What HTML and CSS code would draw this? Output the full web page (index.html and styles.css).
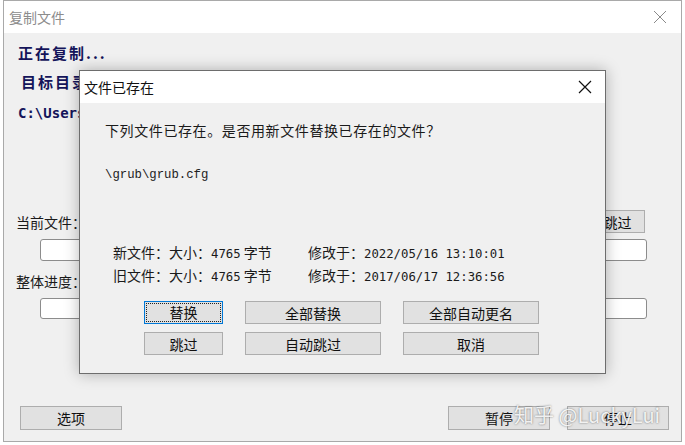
FILE: index.html
```html
<!DOCTYPE html>
<html lang="zh-CN">

<head>
    <meta charset="UTF-8">
    <meta name="viewport" content="width=device-width, initial-scale=1.0">
    <title>复制文件</title>
    <link rel="stylesheet" href="styles.css">
</head>

<body>
    <!-- Main copy window -->
    <div class="window">
        <div class="titlebar">
            <span class="title">复制文件</span>
            <svg class="close" width="14" height="14" viewBox="0 0 14 14">
                <path d="M1 1 L13 13 M13 1 L1 13" stroke="#8a8a8a" stroke-width="1" fill="none"/>
            </svg>
        </div>

        <div class="content">
            <div class="status">正在复制...</div>
            <div class="status target">目标目录：</div>
            <div class="path">C:\Users\Administrator\Desktop\boot</div>

            <div class="row file-row">
                <span class="label">当前文件：</span>
                <button class="btn small">跳过</button>
            </div>
            <div class="bar"></div>

            <div class="row total-row">
                <span class="label">整体进度：</span>
            </div>
            <div class="bar"></div>

            <div class="actions">
                <button class="btn wide">选项</button>
                <div class="right">
                    <button class="btn wide">暂停</button>
                    <button class="btn wide">停止</button>
                </div>
            </div>
        </div>
    </div>

    <!-- File exists dialog -->
    <div class="dialog">
        <div class="dialog-title">
            <span>文件已存在</span>
            <svg class="close" width="14" height="14" viewBox="0 0 14 14">
                <path d="M1 1 L13 13 M13 1 L1 13" stroke="#111" stroke-width="1.2" fill="none"/>
            </svg>
        </div>
        <div class="dialog-body">
            <p class="question">下列文件已存在。是否用新文件替换已存在的文件？</p>
            <p class="filename">\grub\grub.cfg</p>

            <div class="info">
                <div class="info-line">
                    <span class="who">新文件：大小：<span class="num">4765</span> 字节</span>
                    <span>修改于：<span class="num">2022/05/16 13:10:01</span></span>
                </div>
                <div class="info-line">
                    <span class="who">旧文件：大小：<span class="num">4765</span> 字节</span>
                    <span>修改于：<span class="num">2017/06/17 12:36:56</span></span>
                </div>
            </div>

            <div class="choices">
                <button class="btn choice focus"><span>替换</span></button>
                <button class="btn choice">全部替换</button>
                <button class="btn choice">全部自动更名</button>
                <button class="btn choice">跳过</button>
                <button class="btn choice">自动跳过</button>
                <button class="btn choice">取消</button>
            </div>
        </div>
    </div>

    <!-- Watermark -->
    <div class="watermark">知乎 @LuckyLui</div>
</body>

</html>
```

FILE: styles.css
```css
/* Base */
body {
    margin: 0;
    width: 685px;
    height: 445px;
    overflow: hidden;
    background: #ffffff;
    font-family: "Noto Sans CJK SC", "Noto Sans", sans-serif;
    font-size: 14px;
    color: #1a1a1a;
    position: relative;
}

/* Main window */
.window {
    position: absolute;
    left: 3px;
    top: 0;
    width: 677px;
    height: 440px;
    border: 1px solid #a9a9a9;
    background: #f0f0f0;
    display: flex;
    flex-direction: column;
}

.titlebar {
    height: 32px;
    background: #ffffff;
    display: flex;
    align-items: center;
    justify-content: space-between;
    padding: 0 14px 0 5px;
}

.title {
    color: #8c8c8c;
    font-size: 14px;
}

.content {
    flex: 1;
    display: flex;
    flex-direction: column;
    padding: 0 12px;
}

.status {
    height: 20px;
    line-height: 20px;
    margin-top: 10px;
    font-size: 15px;
    font-weight: bold;
    letter-spacing: 2px;
    color: #14145a;
    padding-left: 2px;
}

.target {
    margin-top: 9px;
    padding-left: 5px;
}

.path {
    height: 20px;
    line-height: 20px;
    margin-top: 11px;
    padding-left: 2px;
    font-family: "DejaVu Sans Mono", monospace;
    font-weight: bold;
    font-size: 14px;
    color: #14145a;
    white-space: nowrap;
}

.row {
    display: flex;
    align-items: center;
    justify-content: space-between;
    height: 20px;
}

.file-row {
    height: 23px;
    margin-top: 87px;
}

.total-row {
    margin-top: 10px;
}

.label {
    font-size: 14px;
}

.bar {
    box-sizing: border-box;
    height: 22px;
    margin: 6px 22px 0 24px;
    background: #ffffff;
    border: 1px solid #8c8c8c;
    border-radius: 3px;
}

.total-row + .bar {
    height: 21px;
    margin-top: 7px;
}

/* Buttons */
.btn {
    font-family: "Noto Sans CJK SC", sans-serif;
    font-size: 14px;
    color: #111;
    background: #e1e1e1;
    border: 1px solid #adadad;
    padding: 0;
    height: 24px;
    line-height: 20px;
}

.small {
    width: 55px;
    height: 23px;
    margin-right: 24px;
}

.wide {
    width: 102px;
}

.actions {
    margin-top: auto;
    margin-bottom: 11px;
    display: flex;
    justify-content: space-between;
    padding-left: 4px;
}

.right {
    display: flex;
    gap: 17px;
}

/* Dialog */
.dialog {
    position: absolute;
    left: 79px;
    top: 70px;
    width: 525px;
    height: 302px;
    border: 1px solid #6d6d6d;
    background: #f0f0f0;
    box-shadow: 0 0 14px rgba(0, 0, 0, 0.28);
    display: flex;
    flex-direction: column;
}

.dialog-title {
    height: 32px;
    background: #ffffff;
    display: flex;
    align-items: center;
    justify-content: space-between;
    padding: 0 13px 0 4px;
    font-size: 14px;
    color: #111;
}

.dialog-body {
    padding: 0 0 0 25px;
}

.question {
    margin: 16px 0 0;
    line-height: 22px;
    letter-spacing: 0.6px;
}

.filename {
    margin: 23px 0 0;
    line-height: 22px;
    font-family: "Liberation Mono", monospace;
    font-size: 12.3px;
    color: #222;
}

.info {
    margin-top: 55px;
    padding-left: 8px;
    display: flex;
    flex-direction: column;
    gap: 1px;
}

.info-line {
    display: flex;
    height: 22px;
    line-height: 22px;
}

.who {
    width: 195px;
}

.num {
    font-family: "DejaVu Sans Mono", monospace;
    font-size: 12.3px;
}

.choices {
    margin-top: 15px;
    margin-left: 39px;
    display: grid;
    grid-template-columns: 79px 136px 136px;
    column-gap: 22px;
    row-gap: 8px;
}

.choice {
    height: 23px;
}

.focus {
    border: 1px solid #0078d7;
    padding: 1px;
}

.focus span {
    display: block;
    height: 17px;
    line-height: 17px;
    border: 1px dotted #222;
}

/* Watermark */
.watermark {
    position: absolute;
    left: 514px;
    top: 400px;
    font-family: "Noto Sans CJK SC", sans-serif;
    font-size: 20px;
    color: rgba(255, 255, 255, 0.9);
    text-shadow: 0 0 2px rgba(0, 0, 0, 0.55);
    white-space: nowrap;
}
```
